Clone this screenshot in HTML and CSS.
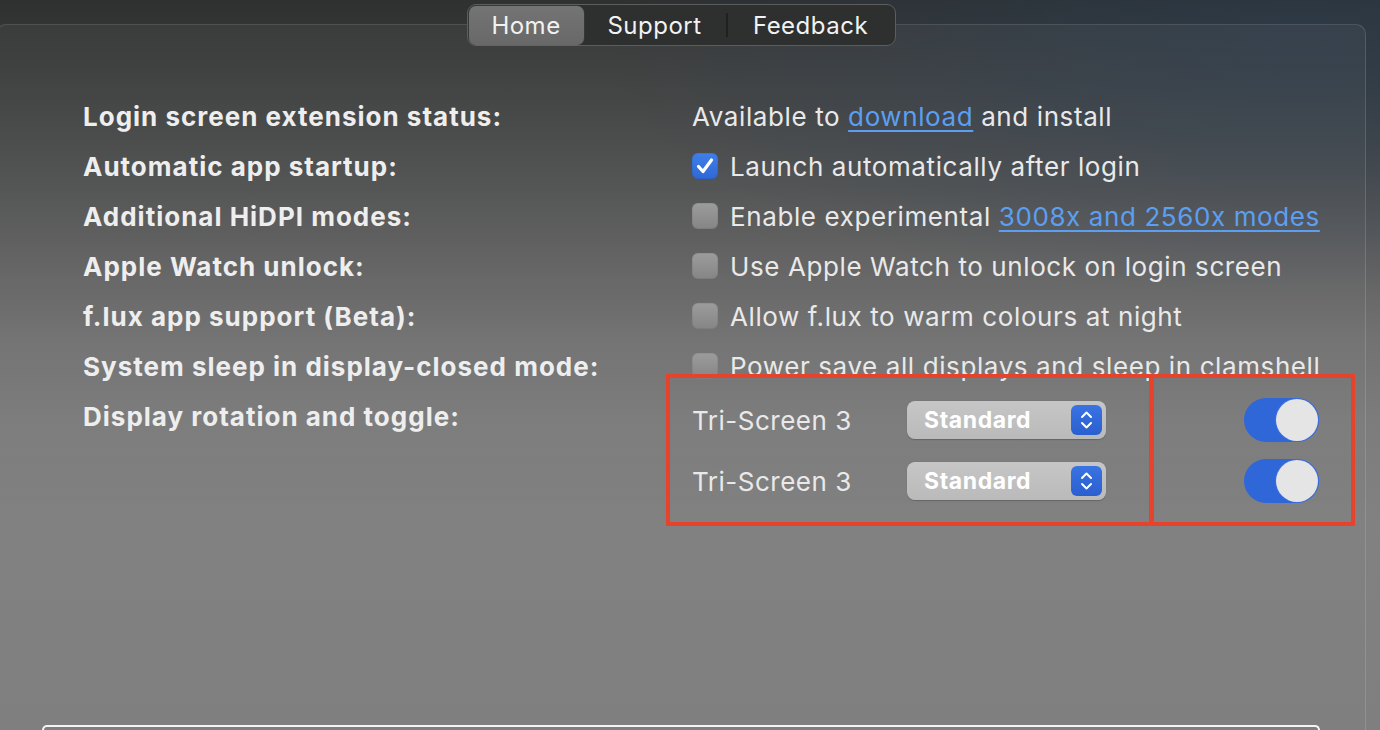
FILE: index.html
```html
<!DOCTYPE html>
<html lang="en">
<head>
<meta charset="utf-8">
<title>Settings</title>
<link rel="stylesheet" href="styles.css">
</head>
<body>
<div class="tabs-wrap">
  <div class="segmented">
    <div class="seg seg-home active">Home</div>
    <div class="seg seg-support">Support</div>
    <div class="seg-divider"></div>
    <div class="seg seg-feedback">Feedback</div>
  </div>
</div>
<main class="panel">
  <div class="settings">
    <div class="label">Login screen extension status:</div>
    <div class="value"><span class="text">Available to <a class="link" href="#">download</a> and install</span></div>

    <div class="label">Automatic app startup:</div>
    <div class="value"><span class="check checked"><svg viewBox="0 0 26 26" width="26" height="26"><path d="M6.5 13.5 L11 18.5 L19.5 7" fill="none" stroke="#fff" stroke-width="3.2" stroke-linecap="round" stroke-linejoin="round"/></svg></span><span class="text">Launch automatically after login</span></div>

    <div class="label">Additional HiDPI modes:</div>
    <div class="value"><span class="check"></span><span class="text">Enable experimental <a class="link" href="#">3008x and 2560x modes</a></span></div>

    <div class="label">Apple Watch unlock:</div>
    <div class="value"><span class="check"></span><span class="text">Use Apple Watch to unlock on login screen</span></div>

    <div class="label">f.lux app support (Beta):</div>
    <div class="value"><span class="check"></span><span class="text">Allow f.lux to warm colours at night</span></div>

    <div class="label">System sleep in display-closed mode:</div>
    <div class="value"><span class="check"></span><span class="text">Power save all displays and sleep in clamshell</span></div>

    <div class="label label-top">Display rotation and toggle:</div>
    <div class="displays">
      <div class="display-row">
        <span class="screen-name">Tri-Screen 3</span>
        <div class="popup"><span class="popup-text">Standard</span><span class="stepper"><svg viewBox="0 0 31 30" width="31" height="30"><path d="M11 12 L15.5 7.5 L20 12 M11 18 L15.5 22.5 L20 18" fill="none" stroke="#fff" stroke-width="2" stroke-linecap="round" stroke-linejoin="round"/></svg></span></div>
        <span></span>
        <div class="toggle"><span class="knob"></span></div>
      </div>
      <div class="display-row">
        <span class="screen-name">Tri-Screen 3</span>
        <div class="popup"><span class="popup-text">Standard</span><span class="stepper"><svg viewBox="0 0 31 30" width="31" height="30"><path d="M11 12 L15.5 7.5 L20 12 M11 18 L15.5 22.5 L20 18" fill="none" stroke="#fff" stroke-width="2" stroke-linecap="round" stroke-linejoin="round"/></svg></span></div>
        <span></span>
        <div class="toggle"><span class="knob"></span></div>
      </div>
    </div>
  </div>
  <div class="bottom-box"></div>
</main>
<div class="annotation">
  <div class="anno-left"></div>
  <div class="anno-right"></div>
</div>
</body>
</html>
```

FILE: styles.css
```css
html, body {
  margin: 0;
  padding: 0;
}
body {
  width: 1380px;
  height: 730px;
  overflow: hidden;
  position: relative;
  font-family: Inter, "Noto Sans", "Liberation Sans", sans-serif;
  color: #ececec;
  background:
    radial-gradient(ellipse 700px 260px at 1300px 40px, rgba(40, 62, 84, 0.55), rgba(40, 62, 84, 0) 100%),
    linear-gradient(to bottom, #2f3030 0px, #393a3a 70px, #4a4b4b 160px, #5f5f5f 250px, #727272 340px, #7c7c7c 420px, #818181 520px, #7f7f7f 730px);
}

.tabs-wrap {
  position: relative;
  z-index: 2;
  width: 1362px;
  padding-top: 4px;
  display: flex;
  justify-content: center;
}
.segmented {
  height: 42px;
  box-sizing: border-box;
  border: 1px solid #5c5d5d;
  border-radius: 9px;
  background: #2e2f2f;
  display: flex;
  align-items: center;
  padding: 1px;
}
.seg {
  height: 39px;
  display: flex;
  align-items: center;
  justify-content: center;
  font-size: 24px;
  letter-spacing: 0.5px;
  color: #f2f2f2;
  border-radius: 7px;
}
.seg-home { width: 115px; }
.seg-support { width: 142px; }
.seg-feedback { width: 166px; }
.seg.active {
  background: linear-gradient(to bottom, #747474, #686868);
  box-shadow: 0 0 0 0.5px rgba(255,255,255,0.08);
}
.seg-divider {
  width: 2px;
  height: 24px;
  background: #1f2020;
}

.panel {
  margin-top: -22px;
  margin-left: -4px;
  width: 1370px;
  height: 706px;
  box-sizing: border-box;
  border: 1px solid rgba(255, 255, 255, 0.14);
  border-bottom: none;
  border-radius: 10px 10px 0 0;
  background: linear-gradient(to bottom, rgba(255,255,255,0.045), rgba(255,255,255,0.0) 500px);
  padding-top: 66px;
  overflow: hidden;
}

.settings {
  display: grid;
  grid-template-columns: 609px 1fr;
  grid-template-rows: repeat(6, 50px) auto;
  padding-left: 86px;
}
.label {
  font-size: 26px;
  font-weight: 700;
  color: #eeeeee;
  display: flex;
  align-items: center;
  letter-spacing: 1px;
  white-space: nowrap;
}
.label-top {
  align-self: start;
  height: 50px;
}
.value {
  font-size: 26px;
  letter-spacing: 0.6px;
  color: #e9e9e9;
  display: flex;
  align-items: center;
  white-space: nowrap;
}
.link {
  color: #5c9ff2;
  text-decoration: underline;
  text-underline-offset: 4px;
  text-decoration-thickness: 2px;
}

.check {
  width: 26px;
  height: 26px;
  box-sizing: border-box;
  border-radius: 6px;
  margin-right: 12px;
  flex: none;
  background: linear-gradient(to bottom, #9c9c9c, #858585);
  box-shadow: inset 0 0 0 1px rgba(0,0,0,0.06);
  display: flex;
  align-items: center;
  justify-content: center;
}
.check.checked {
  background: linear-gradient(to bottom, #3f7fe9, #2f68d6);
}

.displays {
  padding-top: 5px;
  display: flex;
  flex-direction: column;
  gap: 13px;
}
.display-row {
  height: 48px;
  display: grid;
  grid-template-columns: 215px 199px 138px 75px;
  align-items: center;
}
.screen-name {
  font-size: 26px;
  letter-spacing: 0.5px;
  color: #e9e9e9;
  white-space: nowrap;
}
.popup {
  height: 38px;
  border-radius: 8px;
  background: linear-gradient(to bottom, #c6c6c6, #bababa);
  box-shadow: 0 0.5px 1px rgba(0,0,0,0.2);
  display: flex;
  align-items: center;
  justify-content: space-between;
  padding: 0 4px 0 17px;
}
.popup-text {
  font-size: 23px;
  font-weight: 700;
  letter-spacing: 0.6px;
  color: #ffffff;
}
.stepper {
  width: 31px;
  height: 30px;
  border-radius: 6px;
  background: linear-gradient(to bottom, #3a73e2, #2a5fd0);
  display: flex;
}
.toggle {
  width: 75px;
  height: 44px;
  border-radius: 22px;
  background: #2f66d8;
  display: flex;
  align-items: center;
  justify-content: flex-end;
  padding: 1px;
  box-sizing: border-box;
}
.knob {
  width: 42px;
  height: 42px;
  border-radius: 50%;
  background: #e5e5e5;
  box-shadow: 0 0 0 1px #3d6ee0;
}

.bottom-box {
  margin-top: 220px;
  margin-left: 45px;
  width: 1278px;
  height: 5px;
  box-sizing: border-box;
  border: 2px solid #f4f4f4;
  border-bottom: none;
  border-radius: 9px 9px 0 0;
}

.annotation {
  position: absolute;
  left: 666px;
  top: 374px;
  height: 152px;
  display: flex;
  z-index: 3;
}
.anno-left {
  width: 487px;
  height: 152px;
  box-sizing: border-box;
  border: 4px solid #e5432b;
}
.anno-right {
  width: 205px;
  height: 152px;
  margin-left: -3px;
  box-sizing: border-box;
  border: 4px solid #e5432b;
}
```
